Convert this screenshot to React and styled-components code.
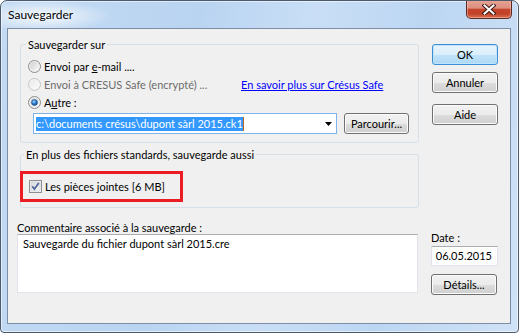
import React from 'react';
import styled, { createGlobalStyle } from 'styled-components';

const FONT = `Lato, "Noto Sans", "Liberation Sans", sans-serif`;

const Global = createGlobalStyle`
  html, body { margin: 0; padding: 0; background: #ffffff; }
  body { font-family: ${FONT}; font-size: 11px; color: #000; }
  * { box-sizing: border-box; }
`;

const Window = styled.div`
  width: 519px;
  height: 333px;
  border: 1px solid #4b5a6c;
  border-radius: 7px 7px 4px 4px;
  overflow: hidden;
  display: flex;
  flex-direction: column;
  box-shadow: inset 0 0 0 1px rgba(255, 255, 255, 0.55);
  background:
    radial-gradient(ellipse 70px 16px at 42px 15px, rgba(255,255,255,0.85), rgba(255,255,255,0) 100%),
    linear-gradient(100deg, #c3daf3 0%, #b9d4f1 35%, #c9def6 55%, #bcd6f2 75%, #cfe2f7 100%);
`;

const TitleBar = styled.div`
  height: 27px;
  display: flex;
  justify-content: space-between;
  align-items: flex-start;
  padding: 0 6px 0 7px;
`;

const Title = styled.div`
  margin-top: 7px;
  font-size: 12px;
  line-height: 14px;
  color: #000;
`;

const CloseButton = styled.div`
  width: 46px;
  height: 19px;
  margin-top: -1px;
  border: 1px solid #5b2a22;
  border-top: none;
  border-radius: 0 0 5px 5px;
  display: flex;
  align-items: center;
  justify-content: center;
  box-shadow: inset 0 0 0 1px rgba(255, 200, 190, 0.5);
  background: linear-gradient(180deg, #e7a596 0%, #dc8e7d 45%, #c6442b 52%, #c14128 75%, #d7714f 100%);
`;

const Client = styled.div`
  flex: 1;
  margin: 0 7px 8px 6px;
  border: 1px solid #7c8fa5;
  background: #f0f0f0;
  padding: 9px 12px 0 0;
  display: flex;
  flex-direction: column;
`;

const TopSection = styled.div`
  display: flex;
  align-items: flex-start;
  gap: 13px;
  padding-left: 12px;
`;

const GroupColumn = styled.div`
  width: 399px;
  display: flex;
  flex-direction: column;
`;

const GroupBox = styled.fieldset`
  margin: ${p => p.$mt || 0}px 0 0 0;
  min-width: 0;
  border: 1px solid #d5dfe5;
  border-radius: 3px;
  padding: ${p => p.$pad};
`;

const Legend = styled.legend`
  margin-left: ${p => p.$ml}px;
  padding: 0 2px;
  font-size: 11px;
  line-height: 13px;
`;

const OptionRow = styled.div`
  display: flex;
  align-items: center;
  height: 18px;
`;

const OptionLabel = styled.label`
  display: flex;
  align-items: center;
  gap: 3px;
  width: ${p => (p.$w ? `${p.$w}px` : 'auto')};
  color: ${p => (p.$disabled ? '#6d6d6d' : '#000')};
  white-space: nowrap;
`;

const Mnemonic = styled.span`
  text-decoration: underline;
`;

const Link = styled.a`
  color: #0000ff;
  text-decoration: underline;
  white-space: nowrap;
`;

const PathRow = styled.div`
  display: flex;
  align-items: center;
  gap: 7px;
  margin-top: 2px;
  padding-left: 5px;
`;

const Combo = styled.div`
  width: 304px;
  height: 21px;
  border: 1px solid #7eb4ea;
  background: #fff;
  display: flex;
  align-items: center;
  justify-content: space-between;
  padding: 0 4px 0 2px;
`;

const Selected = styled.span`
  background: #3399ff;
  color: #fff;
  line-height: 14px;
  white-space: nowrap;
  border-right: 1px solid #b86b1e;
`;

const Button = styled.div`
  width: ${p => p.$w || 66}px;
  height: 21px;
  margin-top: ${p => p.$mt || 0}px;
  display: flex;
  align-items: center;
  justify-content: center;
  border: 1px solid ${p => (p.$default ? '#3c8fd6' : '#707070')};
  border-radius: 3px;
  font-size: 11px;
  color: #000;
  box-shadow: inset 0 0 0 1px ${p => (p.$default ? '#bfe4fb' : '#fbfbfb')};
  background: ${p =>
    p.$default
      ? 'linear-gradient(180deg, #e9f5fd 0%, #d9effc 50%, #c2e4fa 51%, #acd8f5 100%)'
      : 'linear-gradient(180deg, #f2f2f2 0%, #ebebeb 50%, #dddddd 51%, #cfcfcf 100%)'};
`;

const ButtonColumn = styled.div`
  display: flex;
  flex-direction: column;
  padding-top: 6px;
`;

const Highlight = styled.div`
  display: flex;
  align-items: center;
  gap: 3px;
  width: 163px;
  margin-left: -8px;
  border: 3px solid #ec1c24;
  padding: 6px;
  white-space: nowrap;
`;

const BottomSection = styled.div`
  display: flex;
  align-items: flex-start;
  gap: 13px;
  margin-top: 13px;
  padding-left: 9px;
`;

const CommentColumn = styled.div`
  width: 401px;
  display: flex;
  flex-direction: column;
`;

const FieldLabel = styled.div`
  line-height: 13px;
  white-space: nowrap;
`;

const TextBox = styled.div`
  height: ${p => p.$h}px;
  margin-top: ${p => p.$mt || 0}px;
  background: #fff;
  border: 1px solid #e2e3ea;
  border-top-color: #abadb3;
  padding: ${p => p.$pad};
  text-align: ${p => p.$align || 'left'};
  line-height: 14px;
  white-space: nowrap;
`;

const DateColumn = styled.div`
  width: 67px;
  display: flex;
  flex-direction: column;
  padding-top: 10px;
`;

function Radio({ checked, disabled, id }) {
  const ring = disabled ? '#c5c5c5' : '#8b8b8b';
  return (
    <svg width="13" height="13" viewBox="0 0 13 13">
      <defs>
        <linearGradient id={`${id}-in`} x1="0" y1="0" x2="1" y2="1">
          <stop offset="0" stopColor={disabled ? '#eaeaea' : '#cfcfcf'} />
          <stop offset="1" stopColor={disabled ? '#fbfbfb' : '#fafafa'} />
        </linearGradient>
        <radialGradient id={`${id}-dot`} cx="0.4" cy="0.35" r="0.7">
          <stop offset="0" stopColor="#9fd7ff" />
          <stop offset="0.5" stopColor="#2f7fd0" />
          <stop offset="1" stopColor="#14457e" />
        </radialGradient>
      </defs>
      <circle cx="6.5" cy="6.5" r="6" fill={disabled ? '#f4f4f4' : '#f3f3f3'} stroke={ring} />
      <circle cx="6.5" cy="6.5" r="4.5" fill={`url(#${id}-in)`} />
      {checked && <circle cx="6.5" cy="6.5" r="3" fill={`url(#${id}-dot)`} stroke="#1c4f8a" strokeWidth="0.6" />}
    </svg>
  );
}

function Checkbox() {
  return (
    <svg width="13" height="13" viewBox="0 0 13 13">
      <defs>
        <linearGradient id="cb-in" x1="0" y1="0" x2="1" y2="1">
          <stop offset="0" stopColor="#d8dbe0" />
          <stop offset="1" stopColor="#f6f6f6" />
        </linearGradient>
      </defs>
      <rect x="0.5" y="0.5" width="12" height="12" fill="#f6f6f6" stroke="#8f8f8f" />
      <rect x="2" y="2" width="9" height="9" fill="url(#cb-in)" stroke="#c4c8ce" strokeWidth="0.6" />
      <path d="M3.2 6.3 L5.4 9 L9.8 3" fill="none" stroke="#52679f" strokeWidth="1.8" />
    </svg>
  );
}

function CloseGlyph() {
  return (
    <svg width="14" height="11" viewBox="0 0 14 11">
      <path d="M2.5 1.5 L11.5 9.5 M11.5 1.5 L2.5 9.5" stroke="#3a1a15" strokeWidth="4" strokeLinecap="square" />
      <path d="M2.5 1.5 L11.5 9.5 M11.5 1.5 L2.5 9.5" stroke="#ffffff" strokeWidth="2" strokeLinecap="square" />
    </svg>
  );
}

function DropArrow() {
  return (
    <svg width="7" height="4" viewBox="0 0 7 4">
      <path d="M0 0 H7 L3.5 4 Z" fill="#000" />
    </svg>
  );
}

export default function App() {
  return (
    <>
      <Global />
      <Window>
        <TitleBar>
          <Title>Sauvegarder</Title>
          <CloseButton>
            <CloseGlyph />
          </CloseButton>
        </TitleBar>
        <Client>
          <TopSection>
            <GroupColumn>
              <GroupBox $pad="6px 7px 8px 7px">
                <Legend $ml={-2}>Sauvegarder sur</Legend>
                <OptionRow>
                  <OptionLabel>
                    <Radio id="r1" />
                    <span>
                      Envoi par <Mnemonic>e</Mnemonic>-mail ....
                    </span>
                  </OptionLabel>
                </OptionRow>
                <OptionRow>
                  <OptionLabel $disabled $w={213}>
                    <Radio id="r2" disabled />
                    <span>Envoi à CRESUS Safe (encrypté) ...</span>
                  </OptionLabel>
                  <Link>En savoir plus sur Crésus Safe</Link>
                </OptionRow>
                <OptionRow>
                  <OptionLabel>
                    <Radio id="r3" checked />
                    <span>
                      A<Mnemonic>u</Mnemonic>tre :
                    </span>
                  </OptionLabel>
                </OptionRow>
                <PathRow>
                  <Combo>
                    <Selected>c:\documents crésus\dupont sàrl 2015.ck1</Selected>
                    <DropArrow />
                  </Combo>
                  <Button $w={65}>Parcourir...</Button>
                </PathRow>
              </GroupBox>
              <GroupBox $mt={5} $pad="10px 7px 5px 7px">
                <Legend $ml={-4}>En plus des fichiers standards, sauvegarde aussi</Legend>
                <Highlight>
                  <Checkbox />
                  <span>Les pièces jointes [6 MB]</span>
                </Highlight>
              </GroupBox>
            </GroupColumn>
            <ButtonColumn>
              <Button $default>OK</Button>
              <Button $mt={7}>Annuler</Button>
              <Button $mt={11}>Aide</Button>
            </ButtonColumn>
          </TopSection>
          <BottomSection>
            <CommentColumn>
              <FieldLabel>Commentaire associé à la sauvegarde :</FieldLabel>
              <TextBox $h={59} $pad="2px 5px">
                Sauvegarde du fichier dupont sàrl 2015.cre
              </TextBox>
            </CommentColumn>
            <DateColumn>
              <FieldLabel>Date :</FieldLabel>
              <TextBox $h={20} $mt={2} $pad="2px 5px 0 0" $align="right">
                06.05.2015
              </TextBox>
              <Button $mt={8}>Détails...</Button>
            </DateColumn>
          </BottomSection>
        </Client>
      </Window>
    </>
  );
}
